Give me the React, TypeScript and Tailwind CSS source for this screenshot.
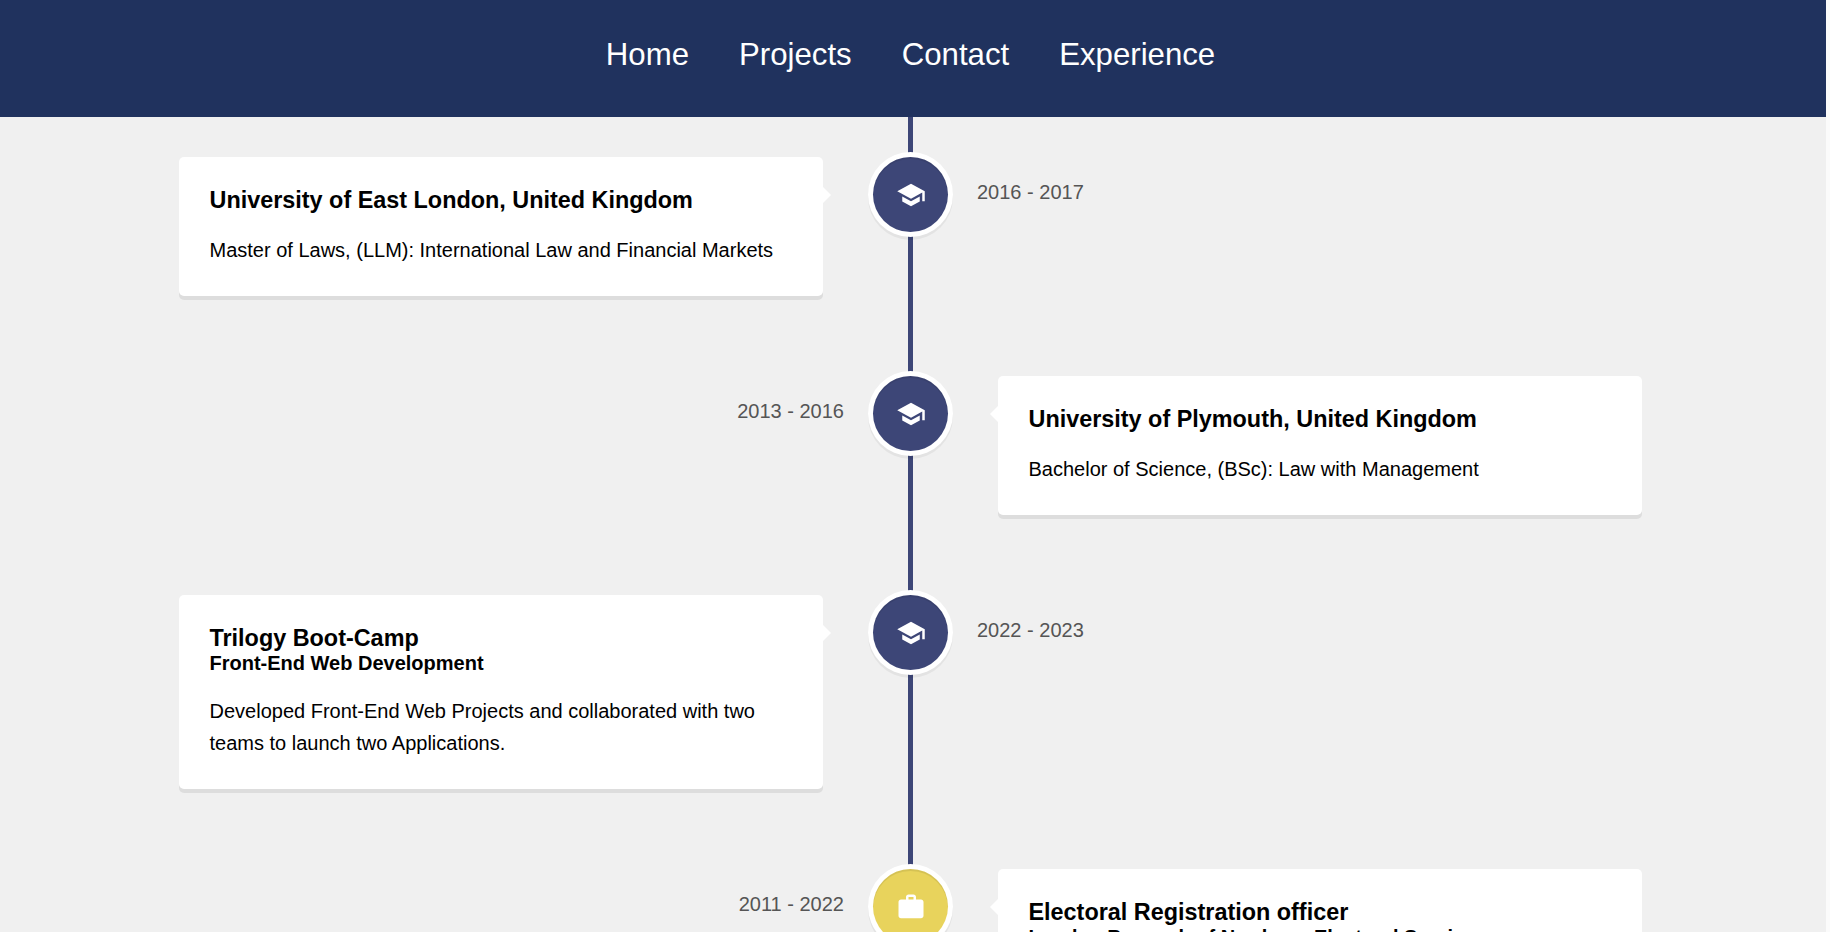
type Item = {
  side: 'left' | 'right'
  date: string
  title: string
  subtitle?: string
  text?: string
  kind: 'edu' | 'work'
}

const items: Item[] = [
  {
    side: 'left',
    date: '2016 - 2017',
    title: 'University of East London, United Kingdom',
    text: 'Master of Laws, (LLM): International Law and Financial Markets',
    kind: 'edu',
  },
  {
    side: 'right',
    date: '2013 - 2016',
    title: 'University of Plymouth, United Kingdom',
    text: 'Bachelor of Science, (BSc): Law with Management',
    kind: 'edu',
  },
  {
    side: 'left',
    date: '2022 - 2023',
    title: 'Trilogy Boot-Camp',
    subtitle: 'Front-End Web Development',
    text: 'Developed Front-End Web Projects and collaborated with two teams to launch two Applications.',
    kind: 'edu',
  },
  {
    side: 'right',
    date: '2011 - 2022',
    title: 'Electoral Registration officer',
    subtitle: 'London Borough of Newham, Electoral Services',
    kind: 'work',
  },
]

function SchoolIcon() {
  return (
    <svg viewBox="0 0 24 24" className="w-[30px] h-[30px]" fill="currentColor">
      <path d="M5 13.18v4L12 21l7-3.82v-4L12 17l-7-3.82zM12 3L1 9l11 6 9-4.91V17h2V9L12 3z" />
    </svg>
  )
}

function WorkIcon() {
  return (
    <svg viewBox="0 0 24 24" className="w-[30px] h-[30px]" fill="currentColor">
      <path d="M20 6h-4V4c0-1.11-.89-2-2-2h-4c-1.11 0-2 .89-2 2v2H4c-1.11 0-1.99.89-1.99 2L2 19c0 1.11.89 2 2 2h16c1.11 0 2-.89 2-2V8c0-1.11-.89-2-2-2zm-6 0h-4V4h4v2z" />
    </svg>
  )
}

function Card({ item }: { item: Item }) {
  const isLeft = item.side === 'left'
  return (
    <div className="relative w-[644px] bg-white rounded-[5px] shadow-[0_4px_0_#ddd] py-[30px] pr-[30px] pl-[30.5px] text-black">
      {/* little arrow pointing at the line */}
      <span
        className={
          isLeft
            ? 'absolute top-[30px] -right-[8px] w-0 h-0 border-y-[8px] border-y-transparent border-l-[8px] border-l-white'
            : 'absolute top-[30px] -left-[8px] w-0 h-0 border-y-[8px] border-y-transparent border-r-[8px] border-r-white'
        }
      />
      <h3 className="text-[23.4px] leading-[27px] font-bold">{item.title}</h3>
      {item.subtitle && <h4 className="text-[20px] leading-[23px] font-bold">{item.subtitle}</h4>}
      {item.text && <p className="text-[20px] leading-[32px] mt-[20px]">{item.text}</p>}
    </div>
  )
}

function TimelineRow({ item }: { item: Item }) {
  const isLeft = item.side === 'left'
  const date = <span className="block text-[20px] text-[#555] leading-[32px] mt-[19px]">{item.date}</span>
  return (
    <div className="relative grid grid-cols-[644px_175px_644px] mb-[80px]">
      <div className={isLeft ? '' : 'flex justify-end -mr-[21px]'}>{isLeft ? <Card item={item} /> : date}</div>
      <div className="flex justify-center items-start">
        <div
          className={`relative z-10 w-[75px] h-[75px] rounded-full shadow-[0_0_0_5px_#fff,inset_0_2px_0_rgba(0,0,0,0.08),0_3px_0_5px_rgba(0,0,0,0.05)] text-white flex items-center justify-center ${
            item.kind === 'edu' ? 'bg-[#3d4677]' : 'bg-[#e8d35c]'
          }`}
        >
          {item.kind === 'edu' ? <SchoolIcon /> : <WorkIcon />}
        </div>
      </div>
      <div className={isLeft ? '-ml-[21px]' : ''}>{isLeft ? date : <Card item={item} />}</div>
    </div>
  )
}

export default function App() {
  return (
    <div className="h-screen overflow-hidden flex bg-white font-['Liberation_Sans',Arial,sans-serif]">
      <div className="flex-1 min-w-0 bg-[#f0f0f0]">
        <nav className="relative z-20 h-[117px] bg-[#20325e] flex justify-center gap-[50px] pt-[37px] pr-[5px] text-[31.2px] leading-[36px] text-white">
          <a>Home</a>
          <a>Projects</a>
          <a>Contact</a>
          <a>Experience</a>
        </nav>
        <div className="relative w-[1463px] ml-[179px] pt-[40px]">
          <div className="absolute top-0 bottom-0 left-[729px] w-[5px] bg-[#3d4677]" />
          {items.map((item) => (
            <TimelineRow key={item.title} item={item} />
          ))}
        </div>
      </div>
      <div className="w-[4px] bg-[#fbfbfb]" />
    </div>
  )
}
